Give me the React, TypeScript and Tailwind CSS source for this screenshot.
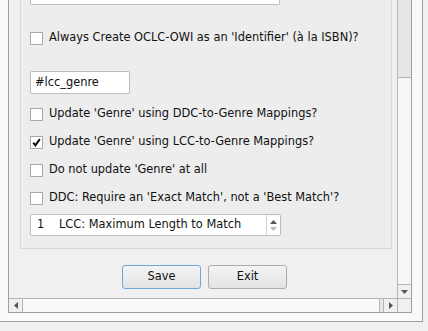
import type { ReactNode } from "react";

const font = { fontFamily: '"DejaVu Sans", Verdana, sans-serif' };

function Check({ checked = false }: { checked?: boolean }) {
  return (
    <span className="flex h-[13px] w-[13px] shrink-0 items-center justify-center border border-[#a9a9a9] bg-white">
      {checked ? (
        <svg width="9" height="9" viewBox="0 0 9 9">
          <path d="M1.2 4.6 L3.4 7.4 L7.8 1.2" fill="none" stroke="#111" strokeWidth="2" />
        </svg>
      ) : null}
    </span>
  );
}

function Row({ label, checked, className }: { label: string; checked?: boolean; className: string }) {
  return (
    <div className={`flex h-[20px] items-center gap-[6px] ${className}`}>
      <Check checked={checked} />
      <span className="whitespace-nowrap">{label}</span>
    </div>
  );
}

function Btn({ children, primary }: { children: ReactNode; primary?: boolean }) {
  return (
    <button
      className={`flex h-[24px] w-[79px] items-center justify-center rounded-[3px] border bg-gradient-to-b from-[#f4f4f4] to-[#e3e3e3] text-[#111] ${
        primary ? "border-[#6fa6d8]" : "border-[#adadad]"
      }`}
    >
      {children}
    </button>
  );
}

export default function App() {
  return (
    <div className="h-[331px] w-[428px] overflow-hidden bg-[#f0f0f0] text-[11.4px] text-[#111]" style={font}>
      <div className="h-[322px] w-[423px] border-b border-r border-[#a0a0a0] bg-[#f9f9f9] pl-[8px]">
        <div className="flex h-[313px] w-[404px] flex-col border-b border-l border-r border-[#a0a0a0]">
          <div className="flex h-[298px]">
            {/* viewport */}
            <div className="flex h-[298px] w-[388px] flex-col bg-[#f0f0f0]">
              <div className="ml-[11px] flex h-[249px] w-[372px] flex-col border-b border-l border-r border-[#d8d8d8] bg-[#ededed] pl-[9px]">
                <div className="h-[5px] w-[250px] rounded-b-[2px] border-b border-l border-r border-[#bdbdbd] bg-white" />
                <Row className="mt-[23px]" label="Always Create OCLC-OWI as an 'Identifier' (à la ISBN)?" />
                <div className="mt-[23px] flex h-[23px] w-[100px] items-center rounded-[2px] border border-[#bdbdbd] bg-white pl-[4px]">
                  #lcc_genre
                </div>
                <Row className="mt-[10px]" label="Update 'Genre' using DDC-to-Genre Mappings?" />
                <Row className="mt-[8px]" checked label="Update 'Genre' using LCC-to-Genre Mappings?" />
                <Row className="mt-[8px]" label="Do not update 'Genre' at all" />
                <Row className="mt-[8px]" label="DDC: Require an 'Exact Match', not a 'Best Match'?" />
                <div className="mt-[6px] flex h-[22px] w-[251px] rounded-[2px] border border-[#bdbdbd] bg-white">
                  <div className="flex flex-1 items-center pl-[6px]">
                    <span className="w-[22px]">1</span>
                    <span>LCC: Maximum Length to Match</span>
                  </div>
                  <div className="flex w-[14px] flex-col items-center justify-center gap-[3px] border-l border-[#d0d0d0]">
                    <svg width="7" height="4" viewBox="0 0 7 4">
                      <path d="M0 4 L3.5 0 L7 4 Z" fill="#555" />
                    </svg>
                    <svg width="7" height="4" viewBox="0 0 7 4">
                      <path d="M0 0 L3.5 4 L7 0 Z" fill="#bbb" />
                    </svg>
                  </div>
                </div>
              </div>
              <div className="ml-[113px] mt-[16px] flex gap-[7px]">
                <Btn primary>Save</Btn>
                <Btn>Exit</Btn>
              </div>
            </div>
            {/* vertical scrollbar */}
            <div className="flex h-[298px] w-[14px] flex-col border-l border-[#b5b5b5] bg-[#f7f7f7]">
              <div className="h-[78px] border-b border-[#b5b5b5] bg-[#e6e6e6]" />
              <div className="flex-1" />
              <div className="flex h-[14px] items-center justify-center border-t border-[#b5b5b5] bg-[#f0f0f0]">
                <svg width="7" height="4" viewBox="0 0 7 4">
                  <path d="M0 0 L3.5 4 L7 0 Z" fill="#555" />
                </svg>
              </div>
            </div>
          </div>
          {/* horizontal scrollbar */}
          <div className="flex h-[14px] border-t border-[#b5b5b5]">
            <div className="flex w-[14px] items-center justify-center border-r border-[#b5b5b5] bg-[#f0f0f0]">
              <svg width="4" height="7" viewBox="0 0 4 7">
                <path d="M4 0 L0 3.5 L4 7 Z" fill="#555" />
              </svg>
            </div>
            <div className="w-[356px] bg-[#f9f9f9]" />
            <div className="w-[4px] border-l border-[#b5b5b5] bg-[#e6e6e6]" />
            <div className="flex w-[14px] items-center justify-center border-l border-[#b5b5b5] bg-[#f0f0f0]">
              <svg width="4" height="7" viewBox="0 0 4 7">
                <path d="M0 0 L4 3.5 L0 7 Z" fill="#555" />
              </svg>
            </div>
            <div className="w-[14px] border-l border-[#b5b5b5] bg-[#f0f0f0]" />
          </div>
        </div>
      </div>
    </div>
  );
}
